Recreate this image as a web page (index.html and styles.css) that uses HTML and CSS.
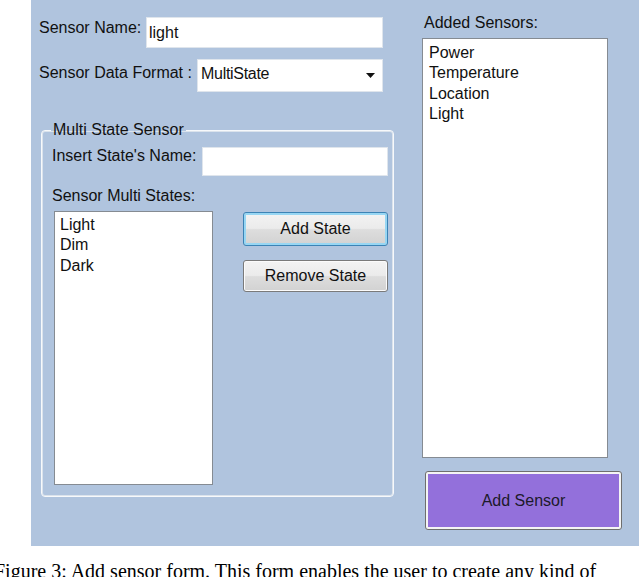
FILE: index.html
```html
<!DOCTYPE html>
<html>
<head>
<meta charset="utf-8">
<title>Add Sensor</title>
<link rel="stylesheet" href="styles.css">
</head>
<body>
<div class="panel">
  <div class="left">
    <div class="row row-name">
      <span class="label label-name">Sensor Name:</span>
      <div class="textbox name-box">light</div>
    </div>
    <div class="row row-format">
      <span class="label label-format">Sensor Data Format :</span>
      <div class="combo">
        <span class="combo-text">MultiState</span>
        <svg class="arrow" width="9" height="5" viewBox="0 0 9 5"><path d="M0 0H9L4.5 5Z" fill="#111"/></svg>
      </div>
    </div>
    <fieldset class="group">
      <legend class="group-title">Multi State Sensor</legend>
      <div class="row-insert">
        <span class="label">Insert State's Name:</span>
        <div class="textbox state-box"></div>
      </div>
      <div class="label label-states">Sensor Multi States:</div>
      <div class="states-row">
        <div class="listbox states-list">
          <div class="item">Light</div>
          <div class="item">Dim</div>
          <div class="item">Dark</div>
        </div>
        <div class="buttons">
          <div class="btn btn-focus">Add State</div>
          <div class="btn btn-remove">Remove State</div>
        </div>
      </div>
    </fieldset>
  </div>
  <div class="right">
    <div class="label label-added">Added Sensors:</div>
    <div class="listbox sensors-list">
      <div class="item">Power</div>
      <div class="item">Temperature</div>
      <div class="item">Location</div>
      <div class="item">Light</div>
    </div>
    <div class="add-sensor"><div class="add-sensor-inner">Add Sensor</div></div>
  </div>
</div>
<p class="caption">Figure 3: Add sensor form. This form enables the user to create any kind of</p>
</body>
</html>
```

FILE: styles.css
```css
html, body {
  margin: 0;
  padding: 0;
  background: #ffffff;
  overflow: hidden;
}

body {
  width: 640px;
  height: 577px;
  font-family: "Liberation Sans", Arial, sans-serif;
  font-size: 16px;
  line-height: 18px;
  color: #111;
}

.panel {
  margin-left: 31px;
  width: 608px;
  height: 546px;
  background: #b0c4de;
  display: flex;
  align-items: flex-start;
  box-sizing: border-box;
  padding-left: 8px;
}

.left {
  width: 356px;
  flex: none;
}

.row {
  width: 344px;
  display: flex;
  justify-content: space-between;
  align-items: flex-start;
}

.row-name {
  margin-top: 17px;
  height: 31px;
}

.label-name {
  margin-top: 2px;
}

.textbox {
  background: #fff;
  border: 1px solid #dfe5ec;
  box-sizing: border-box;
}

.name-box {
  width: 237px;
  height: 31px;
  padding: 6px 0 0 2px;
}

.row-format {
  margin-top: 11px;
  height: 33px;
}

.label-format {
  margin-top: 5px;
}

.combo {
  width: 186px;
  height: 33px;
  background: #fff;
  border: 1px solid #dfe5ec;
  box-sizing: border-box;
  display: flex;
  align-items: flex-start;
  justify-content: space-between;
  padding: 5px 7px 0 3px;
}

.combo-text {
  letter-spacing: -0.3px;
}

.arrow {
  margin-top: 8px;
}

.group {
  margin: 29px 0 0 2px;
  padding: 0 5px 11px 10px;
  width: 353px;
  box-sizing: border-box;
  border: 1px solid #f7f9fb;
  border-radius: 4px;
  box-shadow: inset 0 0 0 1px #dbe3ec;
  min-width: 0;
}

.group-title {
  margin-left: -1px;
  padding: 0 2px;
  line-height: 18px;
}

.row-insert {
  margin-top: 8px;
  display: flex;
  justify-content: space-between;
  align-items: flex-start;
}

.state-box {
  width: 186px;
  height: 29px;
}

.label-states {
  margin-top: 11px;
}

.states-row {
  margin-top: 6px;
  display: flex;
  align-items: flex-start;
}

.listbox {
  background: #fff;
  border: 1px solid #858b92;
  box-sizing: border-box;
}

.item {
  line-height: 20.4px;
}

.states-list {
  margin-left: 2px;
  width: 159px;
  height: 274px;
  padding: 3px 0 0 5px;
}

.buttons {
  margin-left: 30px;
  margin-top: 1px;
  display: flex;
  flex-direction: column;
  gap: 14px;
}

.btn {
  width: 145px;
  box-sizing: border-box;
  border-radius: 3px;
  display: flex;
  align-items: center;
  justify-content: center;
  background: linear-gradient(#f3f3f3 0%, #ebebeb 48%, #dddddd 52%, #d2d2d2 100%);
}

.btn-focus {
  height: 34px;
  border: 1px solid #3c83b5;
  box-shadow: inset 0 0 0 2px #97d6f3;
}

.btn-remove {
  height: 32px;
  border: 1px solid #7a7a7a;
  box-shadow: inset 0 0 0 1px #fbfbfb;
}

.right {
  margin-left: 27px;
  width: 200px;
  flex: none;
}

.label-added {
  margin-top: 14px;
  margin-left: 2px;
}

.sensors-list {
  margin-top: 6px;
  width: 186px;
  height: 420px;
  padding: 4px 0 0 6px;
}

.add-sensor {
  margin-top: 13px;
  margin-left: 3px;
  width: 197px;
  height: 59px;
  box-sizing: border-box;
  border: 1px solid #6e6e6e;
  border-radius: 3px;
  background: #f4f4f4;
  padding: 2px;
}

.add-sensor-inner {
  height: 100%;
  background: #9370db;
  display: flex;
  align-items: center;
  justify-content: center;
  color: #1c1a2a;
}

.caption {
  margin: 14px 0 0 -6px;
  font-family: "Liberation Serif", "Times New Roman", serif;
  font-size: 20px;
  line-height: 23px;
  white-space: nowrap;
  color: #000;
}
```
